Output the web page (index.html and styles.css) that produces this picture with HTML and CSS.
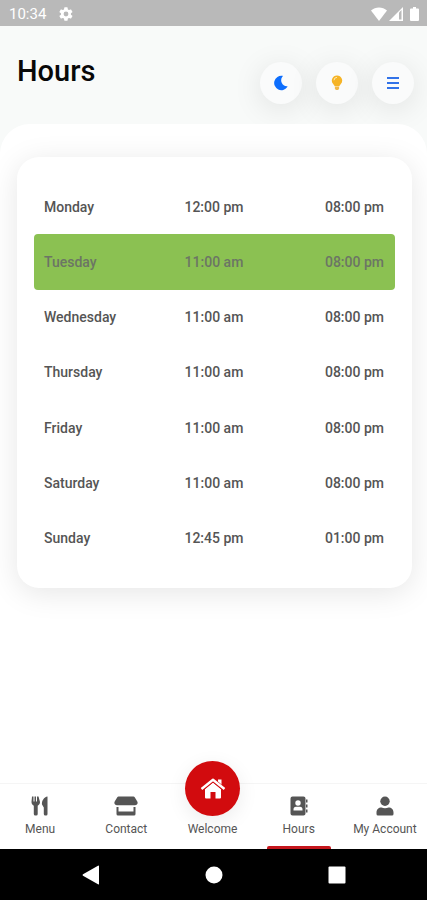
FILE: index.html
```html
<!DOCTYPE html>
<html lang="en">
<head>
<meta charset="utf-8">
<meta name="viewport" content="width=device-width, initial-scale=1">
<title>Hours</title>
<link rel="stylesheet" href="styles.css">
</head>
<body>
<div class="status">
  <span class="clock">10:34</span>
  <svg class="gear" width="16" height="16" viewBox="0 0 24 24" fill="currentColor"><path fill-rule="evenodd" d="M19.4 13a7.500 7.500 0 0 0 0-2l2.100-1.600a.5.5 0 0 0 .1-.7l-2-3.400a.5.5 0 0 0-.6-.2l-2.500 1a7 7 0 0 0-1.700-1l-.4-2.600a.5.5 0 0 0-.5-.5h-4a.5.5 0 0 0-.5.5L9 5.100a7 7 0 0 0-1.700 1l-2.500-1a.5.5 0 0 0-.6.2l-2 3.400a.5.5 0 0 0 .1.700L4.500 11a7.500 7.500 0 0 0 0 2l-2.200 1.600a.5.5 0 0 0-.1.700l2 3.400c.1.200.4.300.6.200l2.500-1a7 7 0 0 0 1.700 1l.4 2.600c0 .3.200.5.500.5h4c.3 0 .5-.2.500-.5l.4-2.600a7 7 0 0 0 1.700-1l2.500 1c.2.100.5 0 .6-.2l2-3.400a.5.5 0 0 0-.1-.7zM12 15.600a3.600 3.600 0 1 1 0-7.200 3.600 3.600 0 0 1 0 7.200z"/></svg>
  <span class="signals">
    <svg width="16" height="14" viewBox="0 0 16 14" fill="currentColor"><path d="M0 3.500C4.500-.5 11.500-.5 16 3.500L8 14z"/></svg>
    <svg width="15" height="14" viewBox="0 0 15 14"><path d="M14 0v14H0z" fill="#fff"/><path d="M10 5.500L12.500 3v9.500H10z" fill="#b9b9b9"/></svg>
    <svg class="battery" width="9" height="14" viewBox="0 0 9 14" fill="currentColor"><path d="M3 0h3v1.500h2q1 0 1 1V13q0 1-1 1H1q-1 0-1-1V2.500q0-1 1-1h2z"/></svg>
  </span>
</div>
<header class="header">
  <h1>Hours</h1>
  <div class="actions">
    <button type="button" class="round" aria-label="Dark mode"><svg width="14" height="16" viewBox="0 0 14 16" fill="#0d6efd"><path d="M8.300.8A7.200 7.200 0 1 0 13.300 12c.3-.4 0-.8-.5-.7A6 6 0 0 1 8.500 1.600c.5-.3.400-.8-.2-.8z"/></svg></button>
    <button type="button" class="round" aria-label="Highlights"><svg width="12" height="16" viewBox="0 0 12 16"><path d="M6 .5a5 5 0 0 0-3.800 8.400c.8 1 1.500 1.800 1.700 2.600h4.200c.2-.8.9-1.600 1.700-2.600A5 5 0 0 0 6 .5z" fill="#f6b426"/><path d="M3.900 12h4.200v1.600L7.200 15H4.800l-.9-1.400z" fill="#f3b94a"/><path d="M3 5.300A3 3 0 0 1 6 2.400" fill="none" stroke="#fde9b5" stroke-width="1"/></svg></button>
    <button type="button" class="round" aria-label="Open menu"><svg width="14" height="14" viewBox="0 0 14 14" fill="#3273e8"><rect x="1" y="1" width="12" height="2"/><rect x="1" y="6" width="12" height="2"/><rect x="1" y="11" width="12" height="2"/></svg></button>
  </div>
</header>
<main class="main">
  <section class="card">
    <table class="hours" aria-label="Opening hours">
      <tbody>
        <tr><th scope="row">Monday</th><td>12:00 pm</td><td>08:00 pm</td></tr>
        <tr class="today"><th scope="row">Tuesday</th><td>11:00 am</td><td>08:00 pm</td></tr>
        <tr><th scope="row">Wednesday</th><td>11:00 am</td><td>08:00 pm</td></tr>
        <tr><th scope="row">Thursday</th><td>11:00 am</td><td>08:00 pm</td></tr>
        <tr><th scope="row">Friday</th><td>11:00 am</td><td>08:00 pm</td></tr>
        <tr><th scope="row">Saturday</th><td>11:00 am</td><td>08:00 pm</td></tr>
        <tr><th scope="row">Sunday</th><td>12:45 pm</td><td>01:00 pm</td></tr>
      </tbody>
    </table>
  </section>
</main>
<nav class="tabs">
  <a href="#menu"><svg width="18" height="20" viewBox="0 0 18 20" fill="currentColor"><path d="M1 .5h1.500v5h1v-5H5v5h1v-5h1.500L9 6c0 2-1 3-2.300 3.700V18q0 1.500-1.500 1.500h-.9Q2.800 19.500 2.800 18V9.700C1.400 9 .5 8 .5 6z"/><path d="M16.500.5c-3.500.6-6 4.500-5.500 8l1.800 3V18q0 1.500 1.500 1.500h.9q1.300 0 1.300-1.500z"/></svg><span>Menu</span></a>
  <a href="#contact"><svg width="24" height="20" viewBox="0 0 24 20" fill="currentColor"><path d="M4.500.5h15q.8 0 1.200.7l2.600 4.300c1 2-.3 3.700-2.300 3.700H3c-2 0-3.300-1.700-2.300-3.700l2.600-4.300q.4-.7 1.200-.7z"/><path d="M2.500 11h2v4.500h15V11h2v7q0 1.500-1.500 1.500H4q-1.500 0-1.500-1.500z"/></svg><span>Contact</span></a>
  <a href="#welcome"><i class="disc"><svg width="26" height="22" viewBox="0 0 26 22"><path d="M18 1.500h3.500v7H18zM5 11l8-6.500L21 11v8.500q0 1-1 1h-4.500V14h-5v6.500H6q-1 0-1-1z" fill="#fff"/><path d="M1.500 11.500L13 2l11.500 9.500" fill="none" stroke="#d20b0e" stroke-width="4"/><path d="M1.500 11L13 1.800 24.500 11" fill="none" stroke="#fff" stroke-width="2.400" stroke-linejoin="round"/></svg></i><span>Welcome</span></a>
  <a href="#hours" class="current" aria-current="page"><svg width="18" height="20" viewBox="0 0 18 20" fill="currentColor"><path fill-rule="evenodd" d="M2.500.5h11q2 0 2 2v15q0 2-2 2h-11q-2 0-2-2v-15q0-2 2-2zM8 4.300a2.700 2.700 0 1 0 0 5.400 2.700 2.700 0 0 0 0-5.400zM6 10.800q-2.500 0-2.500 2.700v1h9v-1q0-2.700-2.500-2.700z"/><path d="M16 3.500h1.500v3H16zM16 8.500h1.500v3H16zM16 13.500h1.500v3H16z"/></svg><span>Hours</span></a>
  <a href="#account"><svg width="18" height="20" viewBox="0 0 18 20" fill="currentColor"><circle cx="9" cy="5.200" r="4.700"/><path d="M5.500 11.500c1 .5 2.200.8 3.500.8s2.500-.3 3.500-.8c3 0 5 2 5 5v1.500q0 1.500-1.500 1.500H2Q.5 19.500.5 18v-1.500c0-3 2-5 5-5z"/></svg><span>My Account</span></a>
</nav>
<div class="system">
  <button type="button" aria-label="Back"><svg width="18" height="20" viewBox="0 0 18 20" fill="#fff"><path d="M16 .8q1-.6 1 .5v17.400q0 1.100-1 .5L1 10.700q-1-.7 0-1.400z"/></svg></button>
  <button type="button" aria-label="Home"><svg width="18" height="18" viewBox="0 0 18 18" fill="#fff"><circle cx="9" cy="9" r="8.500"/></svg></button>
  <button type="button" aria-label="Recent apps"><svg width="18" height="18" viewBox="0 0 18 18" fill="#fff"><rect x=".5" y=".5" width="17" height="17" rx="1"/></svg></button>
</div>
</body>
</html>
```
FILE: styles.css
```css
* { box-sizing: border-box; }
body {
  margin: 0;
  min-height: 100vh;
  display: flex;
  flex-direction: column;
  overflow-x: hidden;
  background: #f8faf9;
  font-family: Roboto, "Liberation Sans", sans-serif;
  color: #555;
}
svg { display: block; }
button { border: 0; padding: 0; }
.status {
  display: flex;
  align-items: center;
  height: 26px;
  padding: 2px 8px 0 9px;
  background: #b9b9b9;
  color: #fff;
}
.clock { font-size: 15px; line-height: 20px; }
.gear { margin-left: 12px; }
.signals { display: flex; gap: 2px; margin-left: auto; }
.battery { margin-left: 4px; }
.header {
  display: flex;
  justify-content: space-between;
  padding: 26px 13px 0 17px;
  height: 98px;
}
h1 {
  margin: 0;
  font-size: 29px;
  line-height: 38px;
  font-weight: 500;
  color: #080808;
}
.actions { display: flex; gap: 14px; padding-top: 10px; }
.round {
  display: grid;
  place-items: center;
  width: 42px;
  height: 42px;
  border-radius: 50%;
  background: #fafbfb;
  box-shadow: 0 5px 30px rgba(0, 0, 0, .1);
}
.main {
  position: relative;
  flex: 1;
  padding: 33px 15px 0 17px;
  border-radius: 30px 30px 0 0;
  background: #fff;
}
.card {
  padding: 22px 17px;
  border-radius: 22px;
  background: #fff;
  box-shadow: 0 5px 30px rgba(0, 0, 0, .1);
}
.hours {
  width: 100%;
  height: 387px;
  border-collapse: separate;
  border-spacing: 0;
  table-layout: fixed;
  font-size: 14px;
  line-height: 20px;
}
.hours th, .hours td {
  padding: 0 11px 0 10px;
  font-weight: 500;
  text-align: center;
  white-space: nowrap;
}
.hours th { text-align: left; }
.hours td:last-child { text-align: right; }
.today { color: #6c7565; }
.today > * { background: #8bc152; }
.today > :first-child { border-radius: 4px 0 0 4px; }
.today > :last-child { border-radius: 0 4px 4px 0; }
.tabs {
  position: relative;
  display: flex;
  height: 66px;
  margin: 0 -1px 0 -3px;
  background: #fff;
  border-top: 1px solid #f5f5f5;
}
.tabs a {
  position: relative;
  flex: 1 1 0;
  min-width: 0;
  display: flex;
  flex-direction: column;
  align-items: center;
  justify-content: flex-end;
  gap: 5px;
  padding-bottom: 12px;
  color: #555;
  font-size: 12px;
  line-height: 16px;
  text-decoration: none;
  white-space: nowrap;
}
.tabs .current::after {
  content: "";
  position: absolute;
  bottom: 0;
  left: 11px;
  right: 11px;
  height: 3px;
  border-radius: 2px 2px 0 0;
  background: #c4161c;
}
.disc {
  display: grid;
  place-items: center;
  flex: none;
  width: 55px;
  height: 55px;
  border-radius: 50%;
  background: #d20b0e;
  box-shadow: 0 5px 20px rgba(0, 0, 0, .08);
}
.system {
  display: flex;
  justify-content: center;
  align-items: center;
  gap: 105px;
  height: 51px;
  background: #000;
}
.system button { background: none; }
```
